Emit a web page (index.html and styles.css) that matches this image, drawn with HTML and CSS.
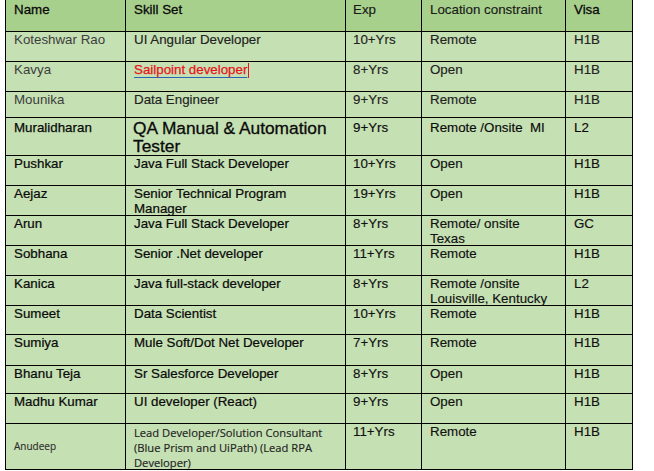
FILE: index.html
```html
<!DOCTYPE html>
<html lang="en">
<head>
<meta charset="utf-8">
<title>Candidates</title>
<link rel="stylesheet" href="styles.css">
</head>
<body>
<div class="sheet" role="table">
  <div class="row head" role="row">
    <div class="cell strong" role="columnheader">Name</div>
    <div class="cell strong" role="columnheader">Skill Set</div>
    <div class="cell exp" role="columnheader">Exp</div>
    <div class="cell" role="columnheader">Location constraint</div>
    <div class="cell strong" role="columnheader">Visa</div>
  </div>
  <div class="row h30 dim" role="row">
    <div class="cell">Koteshwar Rao</div>
    <div class="cell">UI Angular Developer</div>
    <div class="cell exp">10+Yrs</div>
    <div class="cell">Remote</div>
    <div class="cell">H1B</div>
  </div>
  <div class="row h30 dim" role="row">
    <div class="cell">Kavya</div>
    <div class="cell"><span class="flag">Sailpoint developer</span><span class="caret"></span></div>
    <div class="cell exp">8+Yrs</div>
    <div class="cell">Open</div>
    <div class="cell">H1B</div>
  </div>
  <div class="row h26 dim" role="row">
    <div class="cell">Mounika</div>
    <div class="cell">Data Engineer</div>
    <div class="cell exp">9+Yrs</div>
    <div class="cell">Remote</div>
    <div class="cell">H1B</div>
  </div>
  <div class="row h38 tall" role="row">
    <div class="cell">Muralidharan</div>
    <div class="cell big">QA Manual &amp; Automation Tester</div>
    <div class="cell exp">9+Yrs</div>
    <div class="cell">Remote /Onsite&nbsp; MI</div>
    <div class="cell">L2</div>
  </div>
  <div class="row h30 dark" role="row">
    <div class="cell">Pushkar</div>
    <div class="cell">Java Full Stack Developer</div>
    <div class="cell exp">10+Yrs</div>
    <div class="cell">Open</div>
    <div class="cell">H1B</div>
  </div>
  <div class="row h30 dark" role="row">
    <div class="cell">Aejaz</div>
    <div class="cell">Senior Technical Program Manager</div>
    <div class="cell exp">19+Yrs</div>
    <div class="cell">Open</div>
    <div class="cell">H1B</div>
  </div>
  <div class="row h30 dark" role="row">
    <div class="cell">Arun</div>
    <div class="cell">Java Full Stack Developer</div>
    <div class="cell exp">8+Yrs</div>
    <div class="cell">Remote/ onsite<br>Texas</div>
    <div class="cell">GC</div>
  </div>
  <div class="row h30 dark" role="row">
    <div class="cell">Sobhana</div>
    <div class="cell">Senior .Net developer</div>
    <div class="cell exp">11+Yrs</div>
    <div class="cell">Remote</div>
    <div class="cell">H1B</div>
  </div>
  <div class="row h30 dark" role="row">
    <div class="cell">Kanica</div>
    <div class="cell">Java full-stack developer</div>
    <div class="cell exp">8+Yrs</div>
    <div class="cell">Remote /onsite<br>Louisville, Kentucky</div>
    <div class="cell">L2</div>
  </div>
  <div class="row h29 dark" role="row">
    <div class="cell">Sumeet</div>
    <div class="cell">Data Scientist</div>
    <div class="cell exp">10+Yrs</div>
    <div class="cell">Remote</div>
    <div class="cell">H1B</div>
  </div>
  <div class="row h31 dark" role="row">
    <div class="cell">Sumiya</div>
    <div class="cell">Mule Soft/Dot Net Developer</div>
    <div class="cell exp">7+Yrs</div>
    <div class="cell">Remote</div>
    <div class="cell">H1B</div>
  </div>
  <div class="row h28 dark" role="row">
    <div class="cell">Bhanu Teja</div>
    <div class="cell">Sr Salesforce Developer</div>
    <div class="cell exp">8+Yrs</div>
    <div class="cell">Open</div>
    <div class="cell">H1B</div>
  </div>
  <div class="row h30 dark" role="row">
    <div class="cell">Madhu Kumar</div>
    <div class="cell">UI developer (React)</div>
    <div class="cell exp">9+Yrs</div>
    <div class="cell">Open</div>
    <div class="cell">H1B</div>
  </div>
  <div class="row h46" role="row">
    <div class="cell soft mid">Anudeep</div>
    <div class="cell soft">Lead Developer/Solution Consultant<br>(Blue Prism and UiPath) (Lead RPA<br>Developer)</div>
    <div class="cell exp">11+Yrs</div>
    <div class="cell">Remote</div>
    <div class="cell">H1B</div>
  </div>
</div>
</body>
</html>
```
FILE: styles.css
```css
html, body {
  margin: 0;
  padding: 0;
  background: #ffffff;
}

body {
  font-family: "Liberation Sans", Arial, sans-serif;
  font-size: 13.33px;
  color: #111111;
}

.sheet {
  margin: -1px 0 0 5px;
  width: 628px;
  box-sizing: border-box;
  border-left: 1px solid #000;
  border-top: 1px solid #000;
}

.row {
  display: grid;
  grid-template-columns: 120px 220px 76px 144px 67px;
  grid-template-rows: minmax(0, 1fr);
  background: #c5e0b3;
  height: 30px;
}

.row.head {
  background: #a8d08d;
  height: 32px;
}

.h26 { height: 26px; }
.h28 { height: 28px; }
.h29 { height: 29px; }
.h30 { height: 30px; }
.h31 { height: 31px; }
.h38 { height: 38px; }
.h46 { height: 46px; }

.cell {
  box-sizing: border-box;
  border-right: 1px solid #000;
  border-bottom: 1px solid #000;
  padding: 0 4px 0 8px;
  line-height: 15px;
  overflow: visible;
  min-width: 0;
  -webkit-text-stroke: 0.15px currentColor;
}

.head .cell {
  padding-top: 2px;
  color: #1a1a1a;
}

.head .cell.strong {
  color: #0a0a0a;
  -webkit-text-stroke: 0.3px currentColor;
}

.cell.exp {
  padding-left: 7px;
}

.dim .cell {
  color: #222;
}

.dim .cell:first-child {
  color: #3d3d3d;
  -webkit-text-stroke: 0;
}

.dark .cell:nth-child(-n+2) {
  color: #0a0a0a;
  -webkit-text-stroke: 0.22px currentColor;
}

.tall .cell {
  padding-top: 2px;
  color: #0a0a0a;
}

.tall .cell:first-child {
  -webkit-text-stroke: 0.25px currentColor;
}

.tall .cell.big {
  font-size: 17.33px;
  line-height: 18px;
  padding-top: 1px;
  padding-left: 7px;
  padding-right: 2px;
  -webkit-text-stroke: 0.3px currentColor;
}

.flag {
  color: #e8141b;
  -webkit-text-stroke: 0.25px #e8141b;
  text-decoration: underline;
  text-decoration-color: #2b63b5;
  text-decoration-thickness: 1px;
  text-underline-offset: 3px;
}

.caret {
  display: inline-block;
  width: 1px;
  height: 15px;
  background: #e8141b;
  vertical-align: -4px;
  margin-left: 1px;
}

.soft {
  font-family: "Open Sans", "Liberation Sans", sans-serif;
  font-size: 11.2px;
  line-height: 15px;
  color: #222;
  padding-top: 1px;
}

.soft.mid {
  display: flex;
  align-items: center;
  font-size: 10px;
  padding-top: 0;
  color: #2e2e2e;
}
```
